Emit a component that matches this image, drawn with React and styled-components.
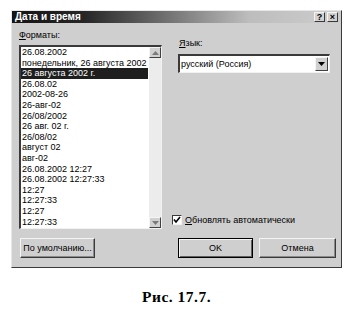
import React from 'react';
import styled, { createGlobalStyle } from 'styled-components';

const Global = createGlobalStyle`
  html, body { margin: 0; padding: 0; background: #fff; }
  body { width: 356px; height: 327px; overflow: hidden; font-family: "Liberation Sans", Arial, sans-serif; }
`;

const Page = styled.div`
  width: 356px;
  height: 327px;
  box-sizing: border-box;
  padding: 10px 0 0 11px;
  display: flex;
  flex-direction: column;
`;

const Dialog = styled.div`
  width: 331px;
  height: 258px;
  box-sizing: border-box;
  background: #cfcfcf;
  border: 1px solid;
  border-color: #e6e6e6 #3a3a3a #3a3a3a #e6e6e6;
  display: flex;
  flex-direction: column;
`;

const TitleBar = styled.div`
  height: 12px;
  flex: none;
  display: flex;
  align-items: center;
  padding: 0 3px 0 3px;
  background: linear-gradient(90deg, #141414 0%, #262626 22%, #7a7a7a 50%, #bdbdbd 72%, #cdcdcd 100%);
`;

const TitleText = styled.div`
  color: #fff;
  font-weight: bold;
  font-size: 10px;
  line-height: 12px;
  flex: 1;
`;

const TitleButtons = styled.div`
  display: flex;
  gap: 2px;
`;

const TitleButton = styled.div`
  width: 11px;
  height: 10px;
  box-sizing: border-box;
  background: #d2d2d2;
  border: 1px solid;
  border-color: #f4f4f4 #3a3a3a #3a3a3a #f4f4f4;
  font-size: 9px;
  font-weight: bold;
  line-height: 8px;
  text-align: center;
  color: #000;
`;

const Content = styled.div`
  display: flex;
  gap: 10px;
  padding: 6px 5px 0 7px;
`;

const LeftCol = styled.div`
  width: 143px;
  display: flex;
  flex-direction: column;
`;

const RightCol = styled.div`
  flex: 1;
  display: flex;
  flex-direction: column;
  padding-top: 8px;
`;

const Label = styled.div`
  font-size: 9px;
  line-height: 12px;
  color: #000;
  margin-left: ${p => p.$indent || 0}px;
  u { text-decoration: underline; }
`;

const ListBox = styled.div`
  margin-top: 4px;
  height: 184px;
  box-sizing: border-box;
  background: #fff;
  border-top: 2px solid #3a3a3a;
  border-left: 2px solid #3a3a3a;
  border-right: 1px solid #f2f2f2;
  border-bottom: 1px solid #f2f2f2;
  display: flex;
  overflow: hidden;
`;

const Items = styled.div`
  flex: 1;
  display: flex;
  flex-direction: column;
  min-width: 0;
`;

const Item = styled.div`
  height: 10.6px;
  line-height: 10.6px;
  font-size: 9px;
  padding-left: 1px;
  white-space: nowrap;
  color: ${p => (p.$selected ? '#fff' : '#000')};
  background: ${p => (p.$selected ? '#1e1e1e' : 'transparent')};
  margin-right: 1px;
`;

const ScrollBar = styled.div`
  width: 12px;
  flex: none;
  display: flex;
  flex-direction: column;
  background: #ececec;
`;

const ScrollBtn = styled.div`
  height: 11px;
  box-sizing: border-box;
  background: #d0d0d0;
  border: 1px solid;
  border-color: #f4f4f4 #404040 #404040 #f4f4f4;
  display: flex;
  align-items: center;
  justify-content: center;
  margin-top: ${p => (p.$bottom ? 'auto' : '0')};
`;

const Combo = styled.div`
  margin: 5px 0 0 6px;
  width: 152px;
  height: 19px;
  box-sizing: border-box;
  background: #fff;
  border-top: 2px solid #3a3a3a;
  border-left: 2px solid #3a3a3a;
  border-right: 1px solid #f2f2f2;
  border-bottom: 1px solid #f2f2f2;
  display: flex;
  align-items: center;
`;

const ComboText = styled.div`
  flex: 1;
  font-size: 9px;
  padding-left: 1px;
  color: #000;
`;

const ComboBtn = styled.div`
  width: 13px;
  height: 14px;
  box-sizing: border-box;
  background: #d0d0d0;
  border: 1px solid;
  border-color: #f4f4f4 #404040 #404040 #f4f4f4;
  display: flex;
  align-items: center;
  justify-content: center;
  margin-right: 1px;
`;

const CheckRow = styled.div`
  margin-top: auto;
  margin-bottom: 4px;
  display: flex;
  align-items: center;
  gap: 3px;
  font-size: 9px;
  color: #000;
`;

const CheckBox = styled.div`
  width: 10px;
  height: 10px;
  box-sizing: border-box;
  background: #fff;
  border-top: 1px solid #3a3a3a;
  border-left: 1px solid #3a3a3a;
  border-right: 1px solid #f2f2f2;
  border-bottom: 1px solid #f2f2f2;
  display: flex;
  align-items: center;
  justify-content: center;
`;

const ButtonRow = styled.div`
  display: flex;
  gap: 6px;
  padding: 9px 5px 0 8px;
`;

const Button = styled.div`
  width: ${p => p.$w}px;
  height: 20px;
  box-sizing: border-box;
  background: #cfcfcf;
  border: 1px solid;
  border-color: ${p => (p.$default ? '#000' : '#f4f4f4 #3a3a3a #3a3a3a #f4f4f4')};
  box-shadow: ${p => (p.$default ? 'inset 1px 1px 0 #f4f4f4, inset -1px -1px 0 #606060' : 'inset -1px -1px 0 #8a8a8a')};
  font-size: 9px;
  line-height: 18px;
  text-align: center;
  color: #000;
  margin-left: ${p => (p.$push ? 'auto' : '0')};
`;

const Caption = styled.div`
  margin-top: 20px;
  width: 331px;
  text-align: center;
  font-family: "Liberation Serif", "Times New Roman", serif;
  font-weight: bold;
  font-size: 15.5px;
  letter-spacing: 0.5px;
  color: #000;
`;

const formats = [
  '26.08.2002',
  'понедельник, 26 августа 2002',
  '26 августа 2002 г.',
  '26.08.02',
  '2002-08-26',
  '26-авг-02',
  '26/08/2002',
  '26 авг. 02 г.',
  '26/08/02',
  'август 02',
  'авг-02',
  '26.08.2002 12:27',
  '26.08.2002 12:27:33',
  '12:27',
  '12:27:33',
  '12:27',
  '12:27:33',
];

const Arrow = ({ up, color = '#7a7a7a' }) => (
  <svg width="7" height="4" viewBox="0 0 7 4">
    {up ? <polygon points="3.5,0 7,4 0,4" fill={color} /> : <polygon points="0,0 7,0 3.5,4" fill={color} />}
  </svg>
);

export default function App() {
  return (
    <>
      <Global />
      <Page>
        <Dialog>
          <TitleBar>
            <TitleText>Дата и время</TitleText>
            <TitleButtons>
              <TitleButton>?</TitleButton>
              <TitleButton>×</TitleButton>
            </TitleButtons>
          </TitleBar>
          <Content>
            <LeftCol>
              <Label><u>Ф</u>орматы:</Label>
              <ListBox>
                <Items>
                  {formats.map((f, i) => (
                    <Item key={i} $selected={i === 2}>{f}</Item>
                  ))}
                </Items>
                <ScrollBar>
                  <ScrollBtn><Arrow up /></ScrollBtn>
                  <ScrollBtn $bottom><Arrow /></ScrollBtn>
                </ScrollBar>
              </ListBox>
            </LeftCol>
            <RightCol>
              <Label $indent={7}><u>Я</u>зык:</Label>
              <Combo>
                <ComboText>русский (Россия)</ComboText>
                <ComboBtn><Arrow color="#000" /></ComboBtn>
              </Combo>
              <CheckRow>
                <CheckBox>
                  <svg width="8" height="8" viewBox="0 0 8 8">
                    <polyline points="1,3.5 3,6 7,1" fill="none" stroke="#000" strokeWidth="1.6" />
                  </svg>
                </CheckBox>
                <span><u>О</u>бновлять автоматически</span>
              </CheckRow>
            </RightCol>
          </Content>
          <ButtonRow>
            <Button $w={75}>По умолчанию...</Button>
            <Button $w={75} $default $push>OK</Button>
            <Button $w={77}>Отмена</Button>
          </ButtonRow>
        </Dialog>
        <Caption>Рис. 17.7.</Caption>
      </Page>
    </>
  );
}
